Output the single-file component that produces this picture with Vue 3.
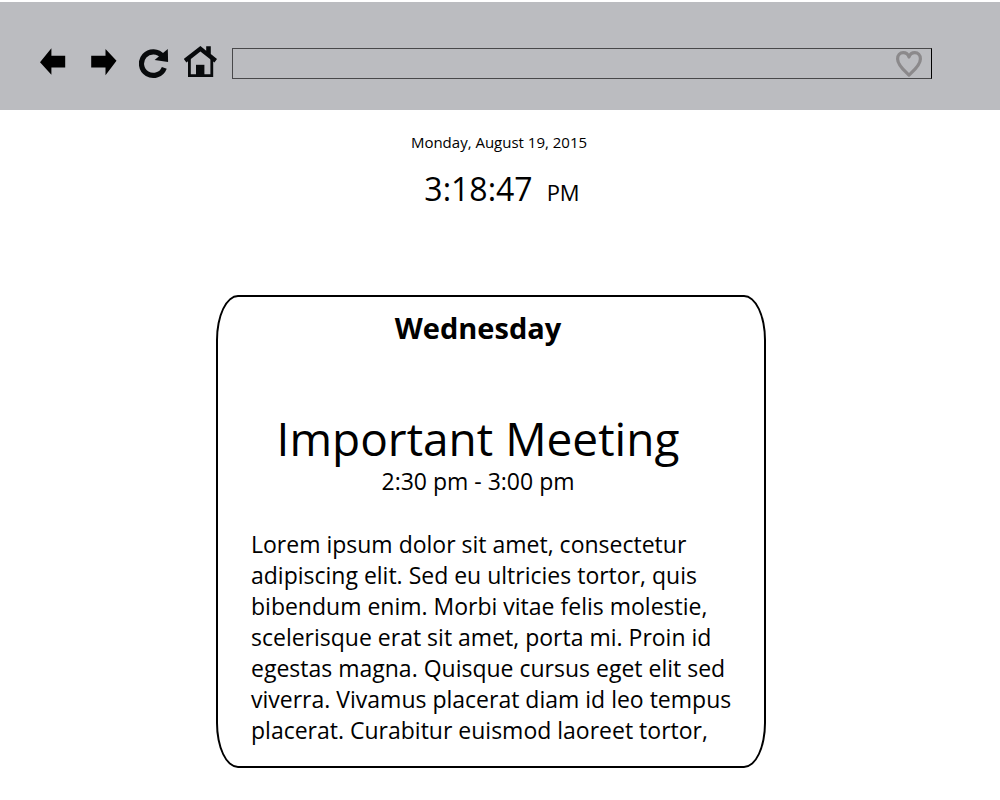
<script setup>
import { ref } from 'vue'

const address = ref('')
const lines = [
  'Lorem ipsum dolor sit amet, consectetur',
  'adipiscing elit. Sed eu ultricies tortor, quis',
  'bibendum enim. Morbi vitae felis molestie,',
  'scelerisque erat sit amet, porta mi. Proin id',
  'egestas magna. Quisque cursus eget elit sed',
  'viverra. Vivamus placerat diam id leo tempus',
  'placerat. Curabitur euismod laoreet tortor,',
]
</script>

<template>
  <div class="page">
    <header class="toolbar">
      <button class="tool" type="button" aria-label="Back">
        <svg width="36" height="33" viewBox="40 46 36 33">
          <path d="M40 62.3 51.4 48.3V55.7H65.2V67.6H51.4V74.7Z" />
        </svg>
      </button>
      <button class="tool" type="button" aria-label="Forward">
        <svg width="33" height="33" viewBox="91 46 33 33">
          <path d="M116.5 60.8 105.5 49V55.7H91.2V67.6H105.5V75.3Z" />
        </svg>
      </button>
      <button class="tool" type="button" aria-label="Reload">
        <svg width="30" height="33" viewBox="139 46 30 33">
          <path d="M164.3 67.8A11.8 11.8 0 1 1 162.6 56.4" fill="none" stroke="#080a0c" stroke-width="5.2" />
          <path d="M167.8 49 168.1 62 154.6 59.9Z" fill="#080a0c" />
        </svg>
      </button>
      <button class="tool" type="button" aria-label="Home">
        <svg width="33" height="33" viewBox="184 46 33 33">
          <path d="M189.4 59V75.6H211.8V59" fill="none" stroke="#080a0c" stroke-width="2.8" />
          <path d="M200.4 46 206.2 50.8V46.2H210.8V54L217 59 214.4 62.4 200.4 51.4 186.4 62.4 183.8 59Z" fill="#080a0c" />
          <path d="M196 64.8H204.4V76H196Z" fill="#080a0c" />
        </svg>
      </button>
      <div class="address">
        <input v-model="address" class="address-input" type="text" aria-label="Address" />
        <button class="favorite" type="button" aria-label="Add to favorites">
          <svg width="28" height="28" viewBox="0 0 28 28">
            <path d="M14 25C10.5 21.5 2.6 15.5 2.6 8.9 2.6 5.2 5 2.7 8.2 2.7 11 2.7 13.1 4.5 14 7 14.9 4.5 17 2.7 19.8 2.7 23 2.7 25.4 5.2 25.4 8.9 25.4 15.5 17.5 21.5 14 25Z" fill="none" stroke="#8b898b" stroke-width="3.2" stroke-linejoin="round" />
          </svg>
        </button>
      </div>
    </header>

    <main class="content">
      <p class="date">Monday, August 19, 2015</p>
      <p class="clock">3:18:47<span class="period">PM</span></p>

      <article class="card">
        <div class="card-head">
          <h2 class="day">Wednesday</h2>
          <h1 class="title">Important Meeting</h1>
          <p class="time">2:30 pm - 3:00 pm</p>
        </div>
        <p class="notes">
          <template v-for="(line, i) in lines" :key="i">{{ line }}<br v-if="i < lines.length - 1" /></template>
        </p>
      </article>
    </main>
  </div>
</template>

<style>
body {
  margin: 0;
  background: #fff;
}
</style>

<style scoped>
.page {
  padding: 2px 0 31px;
  color: #000;
  font-family: "Open Sans", "Noto Sans", sans-serif;
}
h1,
h2,
p {
  margin: 0;
}
.toolbar {
  display: flex;
  align-items: flex-start;
  gap: 15px;
  padding: 44px 68px 31px 40px;
  background: #bbbcc0;
}
.tool,
.favorite {
  flex: none;
  padding: 0;
  border: 0;
  background: none;
  cursor: pointer;
}
svg {
  display: block;
}
.address {
  position: relative;
  flex: 1;
  margin-top: 2px;
}
.address-input {
  display: block;
  box-sizing: border-box;
  width: 100%;
  height: 31px;
  padding: 0 44px 0 10px;
  border: 1px solid #48484a;
  border-right-color: #000;
  border-radius: 0;
  background: transparent;
  font: 16px "Open Sans", sans-serif;
}
.favorite {
  position: absolute;
  top: 2px;
  right: 9px;
}
.content {
  padding-right: 18px;
  text-align: center;
}
.date {
  padding-top: 22px;
  padding-left: 16px;
  font-size: 15px;
  line-height: 20px;
}
.clock {
  padding-top: 15px;
  padding-left: 22px;
  font-size: 32px;
  line-height: 44px;
}
.period {
  margin-left: 14px;
  font-size: 22px;
}
.card {
  box-sizing: border-box;
  width: 550px;
  max-width: 100%;
  margin: 81px auto 0;
  padding: 11px 0 20px;
  border: 2px solid #000;
  border-radius: 22px / 45px;
}
.card-head {
  padding-right: 26px;
}
.day {
  font-size: 29px;
  font-weight: 700;
  line-height: 40px;
}
.title {
  padding-top: 60px;
  font-size: 46px;
  font-weight: 400;
  line-height: 60px;
}
.time {
  font-size: 23px;
  line-height: 26px;
}
.notes {
  padding-top: 35px;
  padding-left: 33px;
  font-size: 23px;
  line-height: 31px;
  text-align: left;
  white-space: nowrap;
}
</style>
